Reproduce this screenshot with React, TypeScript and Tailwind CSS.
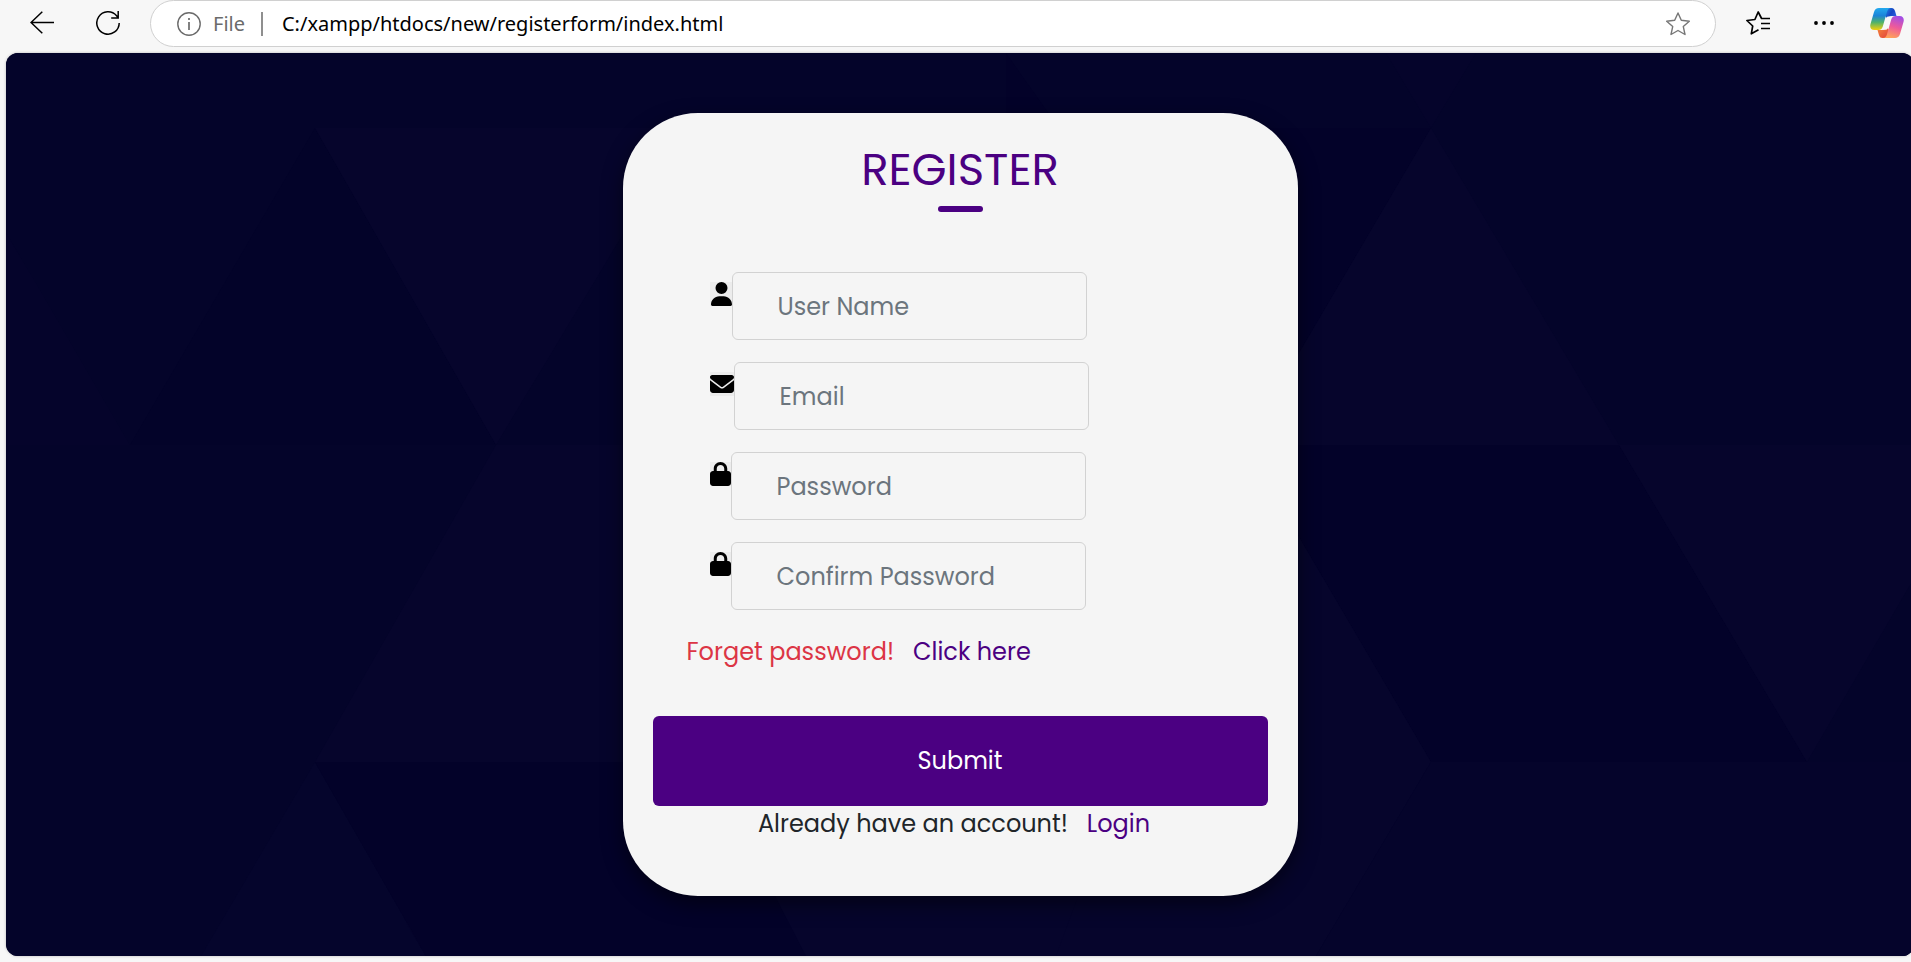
import React from "react";
import { FaUser, FaEnvelope, FaLock } from "react-icons/fa6";

type FieldProps = {
  id: string;
  type: string;
  label: string;
  icon: React.ReactNode;
};

function CopilotLogo() {
  return (
    <svg viewBox="0 0 34 30" className="h-[30px] w-[34px]">
      <defs>
        <linearGradient id="cp-left" x1="0" y1="0" x2="0" y2="1">
          <stop offset="0" stopColor="#22a9ee" />
          <stop offset="0.35" stopColor="#1b83d8" />
          <stop offset="0.65" stopColor="#4fb26a" />
          <stop offset="1" stopColor="#f2cf0c" />
        </linearGradient>
        <linearGradient id="cp-top" x1="0" y1="0" x2="1" y2="0.6">
          <stop offset="0" stopColor="#1f8ae6" />
          <stop offset="0.6" stopColor="#1746c4" />
          <stop offset="1" stopColor="#2a5fe0" />
        </linearGradient>
        <linearGradient id="cp-right" x1="0.7" y1="0" x2="0.4" y2="1">
          <stop offset="0" stopColor="#a24de6" />
          <stop offset="0.5" stopColor="#ee5a9a" />
          <stop offset="1" stopColor="#ffa25a" />
        </linearGradient>
        <linearGradient id="cp-bottom" x1="0" y1="0" x2="1" y2="1">
          <stop offset="0" stopColor="#f58a3c" />
          <stop offset="1" stopColor="#e2403c" />
        </linearGradient>
      </defs>
      <path d="M15 0h6.500c2.200 0 3 1.300 3.600 3.300L26.500 8H22c-2.600 0-3.700 1.200-4.300 3L15 8z" fill="url(#cp-top)" />
      <path d="M19 30h-6.500c-2.200 0-3-1.300-3.600-3.300L7.500 22H12c2.600 0 3.700-1.200 4.300-3L19 22z" fill="url(#cp-bottom)" />
      <path d="M9 0h12c-2.200 0-3.200 1.500-3.900 3.600L12.800 18.500C12 21 10.600 22 8.500 22H4.300C.8 22-.4 19.300.5 15.900L4 3.900C4.800 1.300 6.400 0 9 0z" fill="url(#cp-left)" />
      <path d="M25 30H13c2.200 0 3.200-1.500 3.900-3.600l4.300-14.900C22 9 23.400 8 25.500 8h4.200c3.500 0 4.700 2.700 3.800 6.100L30 26.100C29.200 28.700 27.600 30 25 30z" fill="url(#cp-right)" />
      <path d="M18.600 8.600h3.600c-1 .6-1.500 1.500-1.900 2.900l-2.400 8.300c-.5 1.600-1.200 2-2.500 2h-3.600c1-.6 1.500-1.500 1.900-2.900l2.400-8.300c.5-1.600 1.200-2 2.500-2z" fill="#f7f7f7" />
    </svg>
  );
}

function BrowserBar() {
  return (
    <header className="flex h-[53px] items-start bg-[#f7f7f7] pl-[22px] font-['Noto_Sans','Open_Sans',sans-serif] text-black">
      <div className="flex h-[46px] shrink-0 items-center gap-[26px]">
        <button type="button" aria-label="Back" className="flex size-10 items-center justify-center">
          <svg viewBox="0 0 24 24" className="size-6" fill="none" stroke="currentColor" strokeWidth="1.5">
            <path d="M24 11.5H1M12.3 0.8 1 11.5l11.3 10.7" />
          </svg>
        </button>
        <button type="button" aria-label="Refresh" className="flex size-10 items-center justify-center">
          <svg viewBox="0 0 24 24" className="size-6" fill="none" stroke="currentColor" strokeWidth="1.5">
            <path d="M23.2 12A11.2 11.2 0 1 1 20.6 4.8L22 6.6M22.2 0v7h-7" />
          </svg>
        </button>
      </div>
      <div className="ml-[22px] flex h-[47px] min-w-0 flex-1 items-center rounded-full border border-[#d0d0d0] bg-white pr-[25px] pl-[26px] text-[20px]">
        <svg viewBox="0 0 24 24" className="size-6 shrink-0 text-[#6b6b6b]" fill="none" stroke="currentColor" strokeWidth="1.4">
          <circle cx="12" cy="12" r="11.2" />
          <path d="M12 10v8M12 6v2" strokeWidth="1.7" />
        </svg>
        <span className="ml-3 text-[#6b6b6b]">File</span>
        <span className="ml-4 h-6 w-[2px] bg-[#8f8f8f]" />
        <input
          aria-label="Address"
          defaultValue="C:/xampp/htdocs/new/registerform/index.html"
          className="ml-[19px] min-w-0 flex-1 bg-transparent outline-none"
        />
        <button type="button" aria-label="Add to favorites" className="text-[#767676]">
          <svg viewBox="0 0 24 24" className="size-6" fill="none" stroke="currentColor" strokeWidth="1.4" strokeLinejoin="round">
            <path d="m12 1 3.3 7.3 8 .9-6 5.400 1.700 7.900L12 18.500 5 22.500l1.700-7.900-6-5.400 8-.9z" />
          </svg>
        </button>
      </div>
      <div className="flex h-[46px] shrink-0 items-center pr-[7px] pl-[30px]">
        <button type="button" aria-label="Favorites">
          <svg viewBox="0 0 24 24" className="size-6" fill="none" stroke="currentColor" strokeWidth="1.7" strokeLinejoin="round">
            <path d="M12.500 18.800 5.300 22.800 6.700 15 .9 9.500l8-1L12.200 1l3.400 6.500H24M15 12.500h9M15 17.500h9" />
          </svg>
        </button>
        <button type="button" aria-label="More" className="ml-[42px]">
          <svg viewBox="0 0 24 24" className="size-6" fill="currentColor">
            <circle cx="4" cy="12" r="1.900" />
            <circle cx="12" cy="12" r="1.900" />
            <circle cx="20" cy="12" r="1.900" />
          </svg>
        </button>
        <button type="button" aria-label="Copilot" className="ml-[34px]">
          <CopilotLogo />
        </button>
      </div>
    </header>
  );
}

function Backdrop() {
  return (
    <svg
      aria-hidden="true"
      viewBox="0 0 1908 903"
      preserveAspectRatio="none"
      className="absolute inset-0 h-full w-full"
    >
      <rect width="1908" height="903" fill="#04042a" />
      <path d="M309 75 490 392H124z" fill="#030329" />
      <path d="M309 75h372L490 392z" fill="#06052c" />
      <path d="M30 230 124 392H0V180z" fill="#05042b" />
      <path d="M490 392h372v317H309z" fill="#06052c" />
      <path d="M309 709 420 903H195z" fill="#05052c" />
      <path d="M420 903 400 870 830 709H1425L1310 903z" fill="#06052c" />
      <path d="M309 709H700L800 903H420z" fill="#030229" />
      <path d="M1000 0 1053 75H1425L1239 392 1000 300z" fill="#030229" />
      <path d="M1380 0h90l-45 75z" fill="#05042b" />
      <path d="M1425 75 1613 392H1239z" fill="#06052c" />
      <path d="M1613 392 1801 709H1425L1239 392z" fill="#030229" />
      <path d="M1239 392 1425 709 1310 903H1050z" fill="#06052c" />
      <path d="M1613 392H1908V525L1801 709z" fill="#06052c" />
      <path d="M1425 709H1908V903H1310z" fill="#05042b" />
    </svg>
  );
}

function Field({ id, type, label, icon }: FieldProps) {
  return (
    <div className="flex items-start">
      <label htmlFor={id} aria-label={label} className="mt-[10px] bg-[#ececec] text-[24px] text-black">
        {icon}
      </label>
      <input
        id={id}
        type={type}
        placeholder={label}
        className="h-[68px] w-[355px] rounded-md border border-[#d2d2d2] bg-transparent px-[45px] text-[#212529] placeholder:text-[#6c757d]"
      />
    </div>
  );
}

export default function App() {
  return (
    <div className="flex min-h-screen flex-col overflow-x-hidden bg-[#f7f7f7]">
      <BrowserBar />
      <main className="relative mr-[-3px] mb-[6px] ml-[6px] flex flex-1 items-center justify-center overflow-hidden rounded-xl bg-[#04042a] py-[60px] font-[Poppins,Inter,sans-serif] text-[24px] leading-9 shadow-[0_0_3px_#00000040]">
        <Backdrop />
        <form
          onSubmit={(e) => e.preventDefault()}
          className="relative w-[675px] max-w-full rounded-[75px] bg-[#f5f5f5] px-[30px] pt-[30px] pb-[54px] shadow-[0_8px_20px_#00000080]"
        >
          <h1 className="text-center text-[45px] leading-[54px] text-[#4b0082]">REGISTER</h1>
          <div className="mx-auto mt-[9px] h-[6px] w-[45px] rounded-full bg-[#4b0082]" />
          <div className="mt-[60px] ml-[57px] flex flex-col gap-[22px]">
            <Field id="username" type="text" label="User Name" icon={<FaUser className="ml-px h-6 w-[21px]" />} />
            <Field id="email" type="email" label="Email" icon={<FaEnvelope className="size-6" />} />
            <Field id="password" type="password" label="Password" icon={<FaLock className="h-6 w-[21px]" />} />
            <Field id="confirm" type="password" label="Confirm Password" icon={<FaLock className="h-6 w-[21px]" />} />
          </div>
          <p className="mt-6 ml-[34px] flex gap-[19px]">
            <span className="text-[#dc3545]">Forget password!</span>
            <a href="#reset" className="text-[#4b0082]">Click here</a>
          </p>
          <button type="submit" className="mt-[46px] h-[90px] w-full rounded-md bg-[#4b0082] text-white">
            Submit
          </button>
          <p className="flex justify-center gap-[19px] pr-3 text-[#212529]">
            <span>Already have an account!</span>
            <a href="#login" className="text-[#4b0082]">Login</a>
          </p>
        </form>
      </main>
    </div>
  );
}
